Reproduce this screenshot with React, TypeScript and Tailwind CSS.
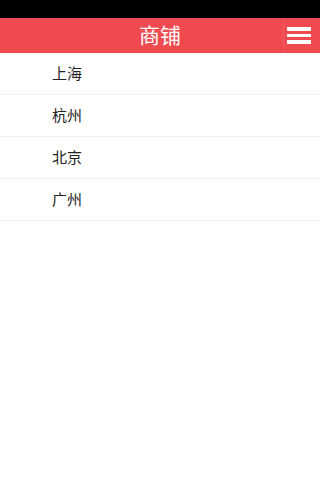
const cities = ["上海", "杭州", "北京", "广州"];

export default function App() {
  return (
    <div
      className="min-h-[480px] w-full bg-white"
      style={{ fontFamily: '"Noto Sans CJK SC", "Liberation Sans", sans-serif' }}
    >
      <div className="h-[18px] bg-black" />
      <header className="relative flex h-[35px] items-center justify-center bg-[#ef4a50]">
        <h1 className="mb-[3px] text-[21px] leading-none text-white">商铺</h1>
        <div className="absolute right-0 top-0 flex h-full items-center">
          <div className="h-full w-px bg-[#f05a60]" />
          <button type="button" className="flex flex-col gap-[3px] pl-[3px] pr-[9px]">
            <span className="block h-[3.5px] w-[24px] bg-white" />
            <span className="block h-[3.5px] w-[24px] bg-white" />
            <span className="block h-[3.5px] w-[24px] bg-white" />
          </button>
        </div>
      </header>
      <ul>
        {cities.map((c) => (
          <li
            key={c}
            className="flex h-[42px] items-center border-b border-[#f0f0f0] pl-[52px] text-[15px] text-[#222]"
          >
            {c}
          </li>
        ))}
      </ul>
    </div>
  );
}
